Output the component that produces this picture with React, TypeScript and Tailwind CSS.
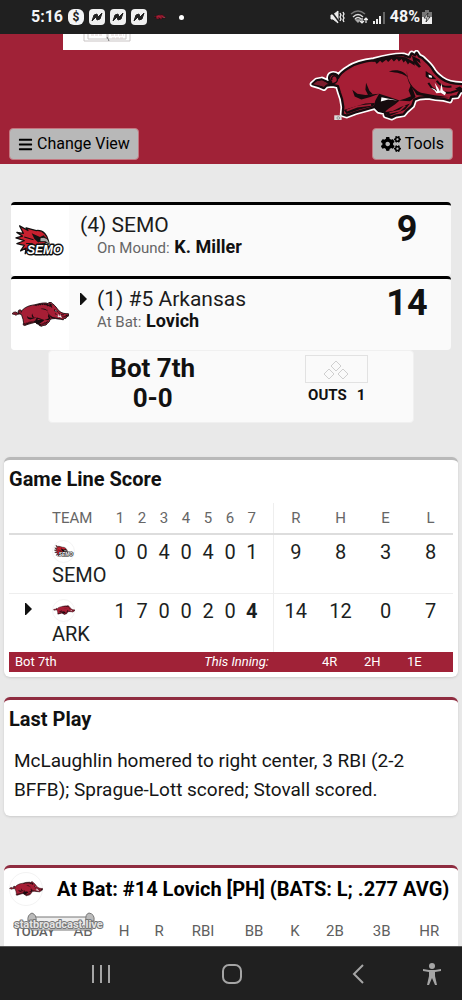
import React from 'react';
import { FaBars, FaCogs } from 'react-icons/fa';

const HOG_BODY =
  'M32 128 L44 117 L60 114 L76 121 L88 122 C78 114 80 98 94 97 C104 97 110 103 108 110 C114 95 128 86 142 78 C160 66 185 60 215 56 C245 48 275 40 305 42 L322 48 L328 36 L338 42 L343 34 L350 45 L360 50 C370 60 382 68 390 82 C396 95 405 102 418 112 C435 125 455 128 484 128 L485 146 L472 150 L464 164 L446 166 L442 177 L424 172 L400 170 L378 166 L352 168 L336 174 L330 192 L314 206 L304 218 L280 222 L268 228 L250 222 L248 212 L230 208 L218 196 L190 204 L160 212 L134 222 L122 218 L124 196 L120 172 L114 154 L108 134 L92 130 L74 132 L66 140 L52 134 Z';

const Hog = ({ className, outlined = false }: { className: string; outlined?: boolean }) => (
  <svg viewBox="24 26 464 212" className={className} aria-hidden="true">
    {outlined && (
      <>
        <path d={HOG_BODY} fill="#fff" stroke="#fff" strokeWidth="17" strokeLinejoin="round" />
        <rect x="97" y="221" width="22" height="14" fill="#ddd" />
        <circle cx="109" cy="229" r="4" fill="none" stroke="#777" strokeWidth="2" />
      </>
    )}
    <path d={HOG_BODY} fill="#a61e35" stroke="#160b0e" strokeWidth="7" strokeLinejoin="round" />
    {/* tail */}
    <path d="M34 128 L46 119 L61 117 L76 125 L67 135 L52 132 Z" fill="#7c1c2c" />
    <path d="M76 124 C98 132 112 120 104 107 C98 98 86 106 90 116" fill="none" stroke="#160b0e" strokeWidth="4" />
    {/* bristles */}
    <path
      d="M205 62 L238 51 L275 45 L310 48 L335 62 L338 73 L322 63 L317 69 L310 57 L304 63 L298 53 L290 60 L284 52 L275 60 L268 52 L258 62 L252 55 L240 64 L234 58 L224 68 L219 61 Z"
      fill="#160b0e"
    />
    <path d="M329 43 L334 65 L350 79 L356 75 L342 57 L355 66 L352 54 Z" fill="#160b0e" />
    {/* shoulder, haunch and legs */}
    <path d="M260 90 C285 82 307 89 317 108 C302 95 286 94 260 90 Z" fill="#160b0e" />
    <path d="M314 88 C314 118 330 142 356 154 L397 161 L440 167 L401 168 L365 163 L343 160 L337 150 C320 128 312 108 314 88 Z" fill="#160b0e" />
    <path d="M326 130 L319 147 L326 164 L310 171 L290 177 L323 179 L340 166 L334 150 Z" fill="#160b0e" />
    <path d="M151 145 L158 165 L178 174 L205 166 L231 157 L190 160 L166 157 Z" fill="#160b0e" />
    <path d="M192 124 L202 148 L212 158 L198 160 L190 145 Z" fill="#160b0e" />
    <path d="M231 157 L257 165 L292 177 L278 189 L260 201 L245 213 L226 206 L215 193 L220 176 Z" fill="#160b0e" />
    <path d="M238 167 L286 177 L258 174 L236 180 Z" fill={outlined ? '#fff' : '#a61e35'} />
    <path d="M126 205 L155 196 L190 186 L218 184 L214 193 L172 204 L134 217 Z M244 212 L272 208 L296 196 L323 186 L309 204 L278 216 L260 224 Z" fill="#160b0e" />
    <path d="M134 207 L165 195 L207 190 M262 214 L292 207 L309 192" fill="none" stroke="#a61e35" strokeWidth="5" />
    {/* face */}
    <path d="M370 89 L389 101 L402 113 L380 112 L370 105 Z" fill="#160b0e" />
    <path d="M378 99 L388 103 L389 109 L380 107 Z" fill="#fff" />
    <path d="M378 124 C391 151 419 155 446 153 L478 143 M403 118 C414 136 428 138 447 135" fill="none" stroke="#160b0e" strokeWidth="6" />
    <path d="M385 139 L397 143 L404 150 L397 124 L407 139 L413 150 L417 125 L421 146 L431 154 L427 161 L415 154 L402 155 L397 148 Z" fill="#fff" />
    <path d="M458 141 L472 135 L480 141 L468 148 Z" fill="#160b0e" />
  </svg>
);

const Redhawk = ({ className }: { className: string }) => (
  <svg viewBox="0 0 54 34" className={className} aria-hidden="true">
    <path
      d="M5 1 L14 6 L12 3 L23 6 C31 5 35 12 36 17 L32 20 L16 24 L11 31 L12 25 L6 28 L10 22 L2 20 L10 17 L1 14 L8 12 L2 8 L9 9 Z"
      fill="#c8202f"
      stroke="#111"
      strokeWidth="1.4"
      strokeLinejoin="round"
    />
    <path d="M10 13 L20 16 M12 20 L19 20" stroke="#111" strokeWidth="1.2" fill="none" />
    <path d="M18 9 L27 13 L31 11 L34 15 L25 19 L21 15 Z" fill="#111" />
    <path d="M27 14 C32 12 37 15 37 21 L33 18 L27 18 Z" fill="#aaa" stroke="#111" />
    <text
      x="13"
      y="31"
      fontFamily="Liberation Sans, sans-serif"
      fontSize="13"
      fontWeight="700"
      fontStyle="italic"
      fill="#fff"
      stroke="#111"
      strokeWidth="3"
      strokeLinejoin="round"
      paintOrder="stroke"
    >
      SEMO
    </text>
  </svg>
);

const Caret = ({ className = '' }: { className?: string }) => (
  <svg viewBox="0 0 7 12" className={`w-[7px] h-3 ${className}`} aria-hidden="true">
    <path d="M0 0 H1 L7 6 L1 12 H0 Z" fill="#111" />
  </svg>
);

const StatusBar = () => (
  <div className="flex h-[34px] shrink-0 items-center justify-between bg-[#202020] pl-[31px] pr-[30px] text-base font-bold text-gray-100">
    <div className="flex items-center gap-[5px]">
      <span>5:16</span>
      <span className="flex size-4 items-center justify-center rounded-md bg-gray-100 text-xs leading-none text-[#202020]">$</span>
      {[0, 1, 2].map((i) => (
        <svg key={i} viewBox="0 0 16 16" className="size-4">
          <rect width="16" height="16" rx="4" fill="#f0f0f0" />
          <path d="M3 12 L5 6 L8 5 L9 8 L13 4 L11 10 L8 11 L7 8 Z" fill="#202020" stroke="#202020" strokeLinejoin="round" />
        </svg>
      ))}
      <Hog className="ml-[2px] h-[6px] w-3" />
      <span className="ml-2 size-[5px] rounded-full bg-white" />
    </div>
    <div className="flex items-center gap-[5px]">
      <svg viewBox="0 0 15 14" className="h-[14px] w-[15px]" fill="none" stroke="#eee">
        <path d="M1 5 H3 L8 1 V13 L3 9 H1 Z" fill="#eee" />
        <path d="M1 1 L10 13" stroke="#202020" strokeWidth="1.5" />
        <path d="M10 3 L11 5 L10 7 L11 9 L10 11 M13 2 L14 4 L13 6 L14 8 L13 10 L14 12" strokeWidth="1.3" />
      </svg>
      <svg viewBox="0 0 18 14" className="h-[14px] w-[18px]" fill="none" stroke="#aaa" strokeWidth="1.4">
        <path d="M1 4 Q8 -2 15 4" stroke="#777" />
        <path d="M3 7 Q8 2 13 7 M5 9 Q8 6 11 9" stroke="#ddd" />
        <path d="M6 10 L8 12 L10 10 Z" fill="#eee" />
        <path d="M12 8 V12 M10 11 L12 13 L14 11 M16 13 V8 M14 10 L16 8 L18 10" stroke="#eee" strokeWidth="1.2" />
      </svg>
      <svg viewBox="0 0 12 13" className="h-[13px] w-3">
        <path d="M0 10 H2 V13 H0 Z M3 8 H5 V13 H3 Z M6 5 H8 V13 H6 Z" fill="#eee" />
        <path d="M10 1 H12 V13 H10 Z" fill="#666" />
      </svg>
      <div className="flex items-center gap-[2px]">
        <span>48%</span>
        <svg viewBox="0 0 10 14" className="h-[14px] w-[10px]">
          <path d="M3 0 H7 V2 H10 V7 H0 V2 H3 Z" fill="#777" />
          <path d="M0 7 H10 V14 H0 Z" fill="#eee" />
          <path d="M6 3 L2 8 H5 L4 12 L8 7 H5 Z" fill="#fff" stroke="#202020" strokeWidth="0.8" />
        </svg>
      </div>
    </div>
  </div>
);

const Header = () => (
  <header className="bg-[#a02237] pb-1">
    <div className="mx-[63px] h-4 bg-white pl-5">
      <svg viewBox="0 0 48 10" className="h-[10px] w-12" fill="none" stroke="#c9c4c4">
        <path d="M1 0 V7 H47 V0 M5 0 V5 H24 V0 M25 0 V5 H43 V0" />
        <path d="M8 1 H20 M28 1 H41 M29 4 H40" stroke="#ddd0d0" strokeDasharray="3 1" />
        <path d="M24 3 L26 7" stroke="#777" />
      </svg>
    </div>
    <div className="flex justify-end overflow-hidden">
      <Hog className="-mr-1 h-[71px] w-[157px]" outlined />
    </div>
    <div className="mt-[7px] flex justify-between px-[9px] text-base text-black">
      <button className="flex h-8 items-center gap-1 rounded border border-[#c47780] bg-[#b8b8b8] px-2">
        <FaBars className="size-[15px]" />
        Change View
      </button>
      <button className="flex h-8 items-center gap-1 rounded border border-[#c47780] bg-[#b8b8b8] px-2">
        <FaCogs className="size-5" />
        Tools
      </button>
    </div>
  </header>
);

type TeamCardProps = {
  logo: React.ReactNode;
  name: string;
  label: string;
  player: string;
  score: number;
  batting?: boolean;
};

const TeamCard = ({ logo, name, label, player, score, batting }: TeamCardProps) => (
  <div className="flex h-[74px] overflow-hidden rounded border-t-3 border-black bg-[#fafafa]">
    <div className="flex w-[58px] items-center justify-center bg-white">{logo}</div>
    <div className="flex-1 pl-[11px] pt-2">
      <div className="flex items-center text-[21px] leading-6 text-[#1c1c1c]">
        {batting && <Caret className="mr-[10px]" />}
        {name}
      </div>
      <div className="pl-[17px] text-[15px] leading-5 text-[#666]">
        {label}: <b className="ml-px text-lg leading-5 text-[#111]">{player}</b>
      </div>
    </div>
    <div className="w-[88px] pt-1 text-center text-4xl font-bold text-[#111]">{score}</div>
  </div>
);

const Situation = () => (
  <div className="mx-[37px] flex h-[73px] rounded border border-[#f0f0f0] bg-[#fafafa] text-[#111]">
    <div className="w-[57%] pt-[2px] text-center text-[26px] font-bold leading-[30px]">
      <div>Bot 7th</div>
      <div>0-0</div>
    </div>
    <div className="flex flex-1 flex-col items-center pl-1 pt-1">
      <svg viewBox="0 0 63 28" className="h-7 w-[63px]" fill="none" stroke="#cfcfcf">
        <rect x="0.5" y="0.5" width="62" height="27" stroke="#e2e2e2" />
        <path d="M31 6 L36 11 L31 16 L26 11 Z M24 14 L29 19 L24 24 L19 19 Z M38 14 L43 19 L38 24 L33 19 Z" />
      </svg>
      <div className="flex gap-[10px] text-[15px] font-bold leading-6">
        <span>OUTS</span>
        <span>1</span>
      </div>
    </div>
  </div>
);

const lineScore = [
  { team: 'SEMO', innings: [0, 0, 4, 0, 4, 0, 1], totals: [9, 8, 3, 8], batting: false },
  { team: 'ARK', innings: [1, 7, 0, 0, 2, 0, 4], totals: [14, 12, 0, 7], batting: true },
];

const LineScore = () => (
  <section className="mx-1 rounded-md border-t-3 border-[#b9b9b9] bg-white px-[5px] pb-[5px] shadow">
    <h2 className="pt-[7px] text-xl font-bold leading-6 text-[#111]">Game Line Score</h2>
    <table className="mt-3 w-full table-fixed border-collapse text-center">
      <colgroup>
        <col className="w-[38px]" />
        <col className="w-[62px]" />
        {lineScore[0].innings.map((_, i) => (
          <col key={i} className={i === 6 ? 'w-8' : 'w-[22px]'} />
        ))}
        <col span={4} />
      </colgroup>
      <thead>
        <tr className="h-[31px] border-b-2 border-[#ddd] text-[15px] text-[#666]">
          <th className="p-0"></th>
          <th className="p-0 pl-[5px] text-left font-normal">TEAM</th>
          {[1, 2, 3, 4, 5, 6, 7].map((n) => (
            <th key={n} className={n === 7 ? 'border-r border-[#eee] p-0 pr-[10px] font-normal' : 'p-0 font-normal'}>
              {n}
            </th>
          ))}
          {['R', 'H', 'E', 'L'].map((h) => (
            <th key={h} className="p-0 font-normal">{h}</th>
          ))}
        </tr>
      </thead>
      <tbody className="text-xl text-[#1c1f22]">
        {lineScore.map((row) => (
          <tr key={row.team} className="h-[59px] border-b border-[#eee] align-top leading-6 last:border-0">
            <td className="p-0 pt-[9px]">{row.batting && <Caret className="mx-auto" />}</td>
            <td className="p-0 pl-[5px] pt-[5px] text-left">
              <div className="flex size-[23px] items-center justify-center rounded-full border border-[#f4f4f4]">
                {row.batting ? <Hog className="w-[22px] shrink-0" /> : <Redhawk className="w-5 shrink-0" />}
              </div>
              {row.team}
            </td>
            {row.innings.map((runs, i) => (
              <td
                key={i}
                className={`p-0 pt-[5px] ${i === 6 ? 'border-r border-[#eee] pr-[10px]' : ''} ${row.batting && i === 6 ? 'font-bold' : ''}`}
              >
                {runs}
              </td>
            ))}
            {row.totals.map((total, i) => (
              <td key={i} className="p-0 pt-[5px]">{total}</td>
            ))}
          </tr>
        ))}
      </tbody>
    </table>
    <div className="flex h-5 items-center bg-[#a02237] px-[6px] text-[13px] text-white">
      <span className="flex-1">Bot 7th</span>
      <i>This Inning:</i>
      <span className="ml-[53px] w-[42px]">4R</span>
      <span className="w-[43px]">2H</span>
      <span className="w-10">1E</span>
    </div>
  </section>
);

const LastPlay = () => (
  <section className="mx-1 rounded-md border-t-3 border-[#8f2c40] bg-white px-[5px] pb-3 shadow">
    <h2 className="pt-[7px] text-xl font-bold leading-6 text-[#111]">Last Play</h2>
    <p className="px-[5px] pt-[15px] text-[19px] leading-[29px] text-[#151515]">
      McLaughlin homered to right center, 3 RBI (2-2 BFFB); Sprague-Lott scored; Stovall scored.
    </p>
  </section>
);

const AtBat = () => (
  <section className="relative mx-1 rounded-t-md border-t-3 border-[#8f2c40] bg-white px-[5px] pb-3">
    <div className="flex h-[42px] items-center">
      <div className="flex size-[34px] shrink-0 items-center justify-center rounded-full border border-[#f3f3f3]">
        <Hog className="w-[34px] shrink-0" />
      </div>
      <h2 className="ml-[14px] whitespace-nowrap text-xl font-bold text-black">
        At Bat: #14 Lovich [PH] (BATS: L; .277 AVG)
      </h2>
    </div>
    <table className="mt-[10px] w-full table-fixed text-[15px] text-[#606060]">
      <thead>
        <tr>
          <th className="w-[51px] p-0 text-[13px] font-medium">TODAY</th>
          <th className="w-[46px] p-0 font-normal">AB</th>
          <th className="w-[36px] p-0 font-normal">H</th>
          <th className="w-[34px] p-0 font-normal">R</th>
          <th className="w-[54px] p-0 font-normal">RBI</th>
          <th className="w-[48px] p-0 font-normal">BB</th>
          <th className="w-[34px] p-0 font-normal">K</th>
          <th className="w-[46px] p-0 font-normal">2B</th>
          <th className="p-0 font-normal">3B</th>
          <th className="p-0 font-normal">HR</th>
        </tr>
      </thead>
    </table>
    {/* site watermark floating over the table */}
    <svg viewBox="0 0 94 22" className="absolute left-[9px] top-[44px] h-[22px] w-[94px]">
      <path d="M18 5 H79 V18 H18 Z" fill="#eee" stroke="#777" />
      <path d="M15 9 Q14 3 19 1 Q24 3 23 9 Z M73 9 Q72 2 76 1 Q82 2 81 9 Z" fill="#bbb" stroke="#777" />
      <text
        x="1"
        y="16"
        fontFamily="Roboto, sans-serif"
        fontSize="11"
        fontWeight="700"
        fill="#e4e4e4"
        stroke="#777"
        strokeWidth="2"
        strokeLinejoin="round"
        paintOrder="stroke"
      >
        statbroadcast.live
      </text>
    </svg>
  </section>
);

const NavBar = () => (
  <nav className="flex h-[54px] shrink-0 items-center border-t border-[#555] bg-[#202020] pl-[91px] pr-[21px] text-[#a5a5a5]">
    <div className="flex flex-1 items-center justify-between">
      <button aria-label="Recent apps">
        <svg viewBox="0 0 20 20" className="size-5" fill="none" stroke="currentColor" strokeWidth="2">
          <path d="M2 1 V19 M10 1 V19 M18 1 V19" />
        </svg>
      </button>
      <button aria-label="Home">
        <svg viewBox="0 0 20 20" className="size-5" fill="none" stroke="currentColor" strokeWidth="2">
          <rect x="1" y="1" width="18" height="18" rx="6" />
        </svg>
      </button>
      <button aria-label="Back">
        <svg viewBox="0 0 12 20" className="h-5 w-3" fill="none" stroke="currentColor" strokeWidth="2">
          <path d="M11 1 L2 10 L11 19" />
        </svg>
      </button>
    </div>
    <button aria-label="Accessibility" className="ml-[59px]">
      <svg viewBox="0 0 18 22" className="h-[22px] w-[18px]" fill="currentColor">
        <circle cx="9" cy="3" r="3" />
        <path d="M0 6 L6 7 H12 L18 6 V8 L12 9 V13 L14 22 H12 L9 15 L6 22 H4 L6 13 V9 L0 8 Z" />
      </svg>
    </button>
  </nav>
);

const App = () => {
  return (
    <div className="flex h-screen flex-col overflow-hidden bg-[#e9e9e9] font-[Roboto,sans-serif]">
      <StatusBar />
      <main className="min-h-0 flex-1 overflow-hidden">
        <Header />
        <div className="px-[11px] pb-[34px] pt-[38px]">
          <TeamCard logo={<Redhawk className="w-[50px]" />} name="(4) SEMO" label="On Mound" player="K. Miller" score={9} />
          <TeamCard logo={<Hog className="w-[58px]" />} name="(1) #5 Arkansas" label="At Bat" player="Lovich" score={14} batting />
          <Situation />
        </div>
        <LineScore />
        <div className="pb-[49px] pt-5">
          <LastPlay />
        </div>
        <AtBat />
      </main>
      <NavBar />
    </div>
  );
};

export default App;
